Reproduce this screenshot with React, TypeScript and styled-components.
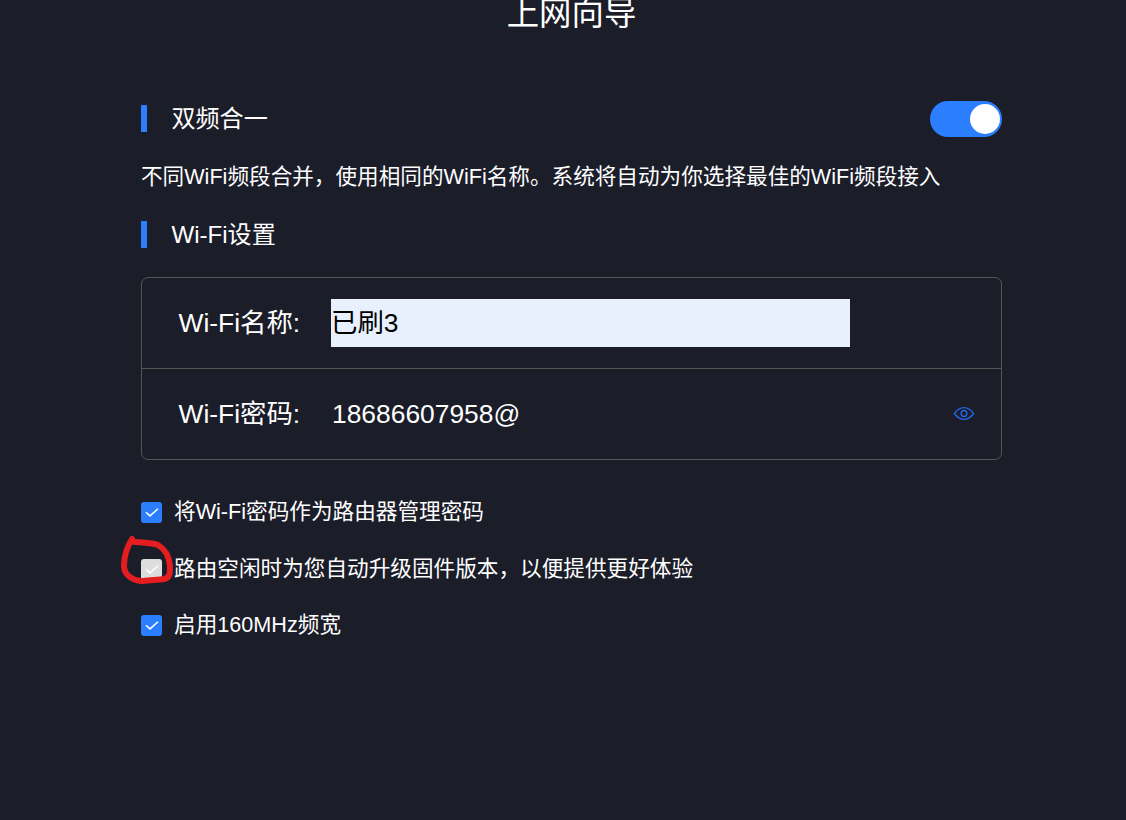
import React from "react";
import styled, { createGlobalStyle } from "styled-components";

const GlobalStyle = createGlobalStyle`
  * { box-sizing: border-box; }
  body {
    margin: 0;
    background: #1b1d29;
    color: #fff;
    font-family: "Liberation Sans", "Noto Sans CJK SC", sans-serif;
  }
`;

const Page = styled.main`
  height: 820px;
  padding-left: 141px;
  overflow: hidden;
`;

const Content = styled.div`
  display: flex;
  flex-direction: column;
  width: 861px;
`;

const Title = styled.h1`
  margin: -6px 0 0;
  height: 40px;
  line-height: 40px;
  font-size: 32.4px;
  font-weight: 400;
  text-align: center;
`;

const SectionHeader = styled.div<{ $top: number }>`
  display: flex;
  align-items: flex-start;
  justify-content: space-between;
  height: 36px;
  margin-top: ${(p) => p.$top}px;
`;

const SectionTitle = styled.h2`
  margin: 4px 0 0;
  height: 27px;
  line-height: 27px;
  padding-left: 24.4px;
  border-left: 6px solid #2b7fff;
  font-size: 24.1px;
  font-weight: 400;
`;

const Switch = styled.button`
  display: flex;
  justify-content: flex-end;
  align-items: center;
  width: 72px;
  height: 36px;
  padding: 0 2px;
  border: 0;
  border-radius: 18px;
  background: #2b7fff;
`;

const Knob = styled.span`
  width: 30px;
  height: 30px;
  border-radius: 50%;
  background: #fff;
`;

const Description = styled.p`
  margin: 23px 0 0;
  height: 34px;
  line-height: 34px;
  font-size: 21.62px;
  white-space: nowrap;
`;

const Card = styled.div`
  margin-top: 24px;
  height: 183px;
  border: 1px solid #555;
  border-radius: 7px;
`;

const Field = styled.div`
  display: flex;
  align-items: center;
  height: 90px;
  padding: 0 26px 0 36px;
  font-size: 26.4px;

  & + & {
    height: 91px;
    border-top: 1px solid #555;
  }
`;

const FieldLabel = styled.label`
  width: 153px;
  line-height: 48px;
  white-space: nowrap;
  padding-left: 0.5px;
`;

const FieldInput = styled.input<{ $filled?: boolean }>`
  width: 519px;
  height: 48px;
  padding: ${(p) => (p.$filled ? "0 1px 5px 0" : "0 1px")};
  border: 0;
  outline: 0;
  background: ${(p) => (p.$filled ? "#e8f0fe" : "transparent")};
  color: ${(p) => (p.$filled ? "#000" : "#fff")};
  font: inherit;
`;

const EyeIcon = styled.svg`
  width: 22px;
  height: 14px;
  margin-left: auto;
  fill: none;
  stroke: #2468ec;
  stroke-width: 1.3;
  stroke-linejoin: round;
`;

const Options = styled.div`
  display: grid;
  grid-template-rows: 57px 56px 57px;
  margin-top: 24px;
`;

const Option = styled.label`
  position: relative;
  display: flex;
  align-items: center;
  font-size: 21.64px;
  line-height: 34px;
  white-space: nowrap;
`;

const OptionText = styled.span<{ $lift: number }>`
  padding-bottom: ${(p) => p.$lift}px;
`;

const Checkbox = styled.span<{ $disabled?: boolean }>`
  display: flex;
  align-items: center;
  justify-content: center;
  width: 21px;
  height: 21px;
  margin-right: 12px;
  border-radius: 3px;
  background: ${(p) => (p.$disabled ? "#ddd" : "#2b7fff")};
`;

const CheckMark = styled.svg`
  width: 21px;
  height: 21px;
  fill: none;
  stroke: #fff;
  stroke-width: 1.5;
`;

const Scribble = styled.svg`
  position: absolute;
  left: -25px;
  top: -11px;
  width: 64px;
  height: 60px;
  fill: none;
  stroke: #e41e20;
  stroke-width: 6;
  stroke-linecap: round;
  stroke-linejoin: round;
`;

const options = [
  { text: "将Wi-Fi密码作为路由器管理密码", lift: 2 },
  { text: "路由空闲时为您自动升级固件版本，以便提供更好体验", lift: 0, disabled: true },
  { text: "启用160MHz频宽", lift: 2 },
];

export default function App() {
  return (
    <Page>
      <GlobalStyle />
      <Content>
        <Title>上网向导</Title>
        <SectionHeader $top={67}>
          <SectionTitle>双频合一</SectionTitle>
          <Switch aria-label="双频合一">
            <Knob />
          </Switch>
        </SectionHeader>
        <Description>
          不同WiFi频段合并，使用相同的WiFi名称。系统将自动为你选择最佳的WiFi频段接入
        </Description>
        <SectionHeader $top={23}>
          <SectionTitle>Wi-Fi设置</SectionTitle>
        </SectionHeader>
        <Card>
          <Field>
            <FieldLabel htmlFor="ssid">Wi-Fi名称:</FieldLabel>
            <FieldInput id="ssid" $filled defaultValue="已刷3" />
          </Field>
          <Field>
            <FieldLabel htmlFor="password">Wi-Fi密码:</FieldLabel>
            <FieldInput id="password" defaultValue="18686607958@" />
            <EyeIcon viewBox="0 0 22 14">
              <path d="M1.300 6.500C3.800 3.300 7 0.700 11 0.700S18.200 3.300 20.700 6.500C18.200 9.700 15 12.300 11 12.300S3.800 9.700 1.300 6.500Z" />
              <ellipse cx="11" cy="6.500" rx="2.900" ry="3" />
            </EyeIcon>
          </Field>
        </Card>
        <Options>
          {options.map(({ text, lift, disabled }) => (
            <Option key={text}>
              <Checkbox $disabled={disabled}>
                <CheckMark viewBox="0 0 21 21">
                  <path d="M5 10.200L9 13.900L17 6.700" />
                </CheckMark>
              </Checkbox>
              <OptionText $lift={lift}>{text}</OptionText>
              {disabled && (
                <Scribble viewBox="0 0 64 60">
                  <path d="M16 9C11 17 8 26 8 36C8 45 17 51 27 51C35 50 43 50 48 49C54 48 54 43 54 36C53 26 49 19 42 15C35 12 25 13 15 11.500" />
                </Scribble>
              )}
            </Option>
          ))}
        </Options>
      </Content>
    </Page>
  );
}
